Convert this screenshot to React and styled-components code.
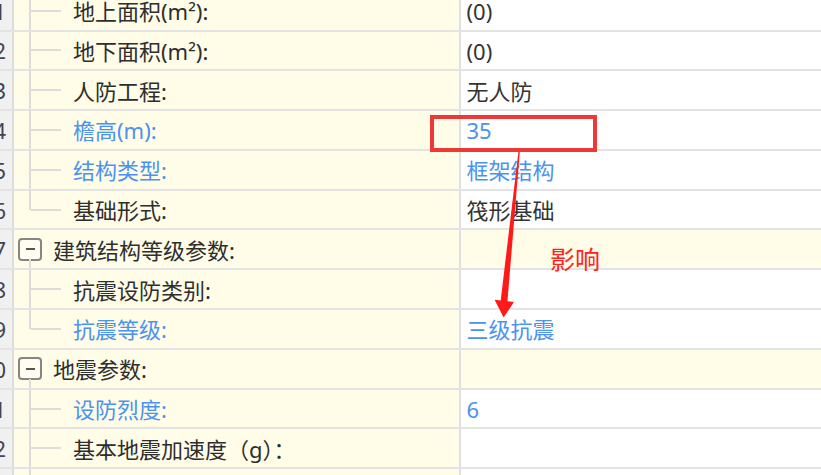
import React from "react";
import styled, { createGlobalStyle } from "styled-components";

const Global = createGlobalStyle`
  html, body { margin: 0; padding: 0; background: #ffffff; overflow: hidden; }
  body { font-family: "Noto Sans", "Noto Sans CJK SC", sans-serif; }
`;

const Page = styled.div`
  position: relative;
  width: 821px;
  height: 475px;
  overflow: hidden;
  background: #ffffff;
`;

const Grid = styled.div`
  display: flex;
  flex-direction: column;
  margin-top: -8.3px;
`;

const Row = styled.div`
  display: flex;
  height: 39.8px;
  flex: 0 0 39.8px;
  box-sizing: border-box;
  border-bottom: 2.4px solid #e3e3e3;
`;

const NumCell = styled.div`
  flex: 0 0 14px;
  box-sizing: border-box;
  border-right: 2px solid #dcdcdc;
  background: #f0f0f0;
  display: flex;
  justify-content: flex-end;
  align-items: center;
  overflow: hidden;
  padding-right: 6px;
  font-size: 22px;
  color: #3f4554;
  white-space: nowrap;
`;

const LabelCell = styled.div`
  flex: 0 0 444.5px;
  display: flex;
  align-items: stretch;
  background: #fffce8;
  overflow: hidden;
`;

const Guide = styled.span`
  position: relative;
  flex: 0 0 47px;
  &::before {
    content: "";
    position: absolute;
    left: 15px;
    top: -3px;
    width: 2px;
    height: ${(p) => (p.$last ? "calc(50% + 3px)" : "calc(100% + 6px)")};
    background: #dcdcdc;
  }
  &::after {
    content: "";
    position: absolute;
    left: 17px;
    top: calc(50% - 1px);
    width: 30px;
    height: 2px;
    background: #dcdcdc;
  }
`;

const GroupGuide = styled.span`
  position: relative;
  flex: 0 0 39px;
  display: flex;
  align-items: center;
  &::after {
    content: "";
    position: absolute;
    left: 15px;
    top: calc(50% + 10px);
    width: 2px;
    bottom: -3px;
    background: #dcdcdc;
  }
`;

const ExpandBox = styled.span`
  margin-left: 4px;
  width: 24px;
  height: 23px;
  box-sizing: border-box;
  border: 2px solid #858585;
  border-radius: 4px;
  background: #fffdf2;
  display: flex;
  align-items: center;
  justify-content: center;
  &::before {
    content: "";
    width: 9px;
    height: 2px;
    background: #555;
  }
`;

const Label = styled.span`
  align-self: center;
  margin-left: ${(p) => (p.$group ? "0" : "12px")};
  font-size: 22px;
  line-height: 1;
  white-space: nowrap;
  color: ${(p) => (p.$blue ? "#4b93ef" : "#2e2e2e")};
  padding-top: 1px;
`;

const ValueCell = styled.div`
  flex: 1 1 auto;
  box-sizing: border-box;
  border-left: 2px solid #e0e0e0;
  background: ${(p) => (p.$group ? "#fffce8" : "#ffffff")};
  display: flex;
  align-items: center;
  padding-left: 6px;
  font-size: 22px;
  line-height: 1;
  padding-top: 1px;
  white-space: nowrap;
  color: ${(p) => (p.$blue ? "#4b93ef" : "#333333")};
`;

const Overlay = styled.div`
  position: absolute;
  inset: 0;
  pointer-events: none;
`;

const RedBox = styled.div`
  position: absolute;
  left: 430px;
  top: 115px;
  width: 167px;
  height: 37px;
  box-sizing: border-box;
  border: 4px solid #ee3737;
`;

const Note = styled.span`
  position: absolute;
  left: 550px;
  top: 246px;
  font-family: "Noto Sans CJK SC", sans-serif;
  font-weight: 400;
  font-size: 25px;
  line-height: 1;
  color: #ff2222;
`;

const ArrowSvg = styled.svg`
  position: absolute;
  left: 0;
  top: 0;
`;

const rows = [
  { n: 11, label: "地上面积(m²):", value: "(0)" },
  { n: 12, label: "地下面积(m²):", value: "(0)" },
  { n: 13, label: "人防工程:", value: "无人防" },
  { n: 14, label: "檐高(m):", value: "35", blue: true },
  { n: 15, label: "结构类型:", value: "框架结构", blue: true },
  { n: 16, label: "基础形式:", value: "筏形基础", last: true },
  { n: 17, label: "建筑结构等级参数:", group: true },
  { n: 18, label: "抗震设防类别:", value: "" },
  { n: 19, label: "抗震等级:", value: "三级抗震", blue: true, last: true },
  { n: 20, label: "地震参数:", group: true },
  { n: 21, label: "设防烈度:", value: "6", blue: true },
  { n: 22, label: "基本地震加速度（g）：", value: "" },
  { n: 23, label: "", value: "" },
];

export default function App() {
  return (
    <>
      <Global />
      <Page>
        <Grid>
          {rows.map((r) => (
            <Row key={r.n}>
              <NumCell>{r.n}</NumCell>
              <LabelCell>
                {r.group ? (
                  <GroupGuide>
                    <ExpandBox />
                  </GroupGuide>
                ) : (
                  <Guide $last={r.last} />
                )}
                <Label $group={r.group} $blue={r.blue}>
                  {r.label}
                </Label>
              </LabelCell>
              <ValueCell $group={r.group} $blue={r.blue}>
                {r.value}
              </ValueCell>
            </Row>
          ))}
        </Grid>
        <Overlay>
          <RedBox />
          <ArrowSvg width="821" height="475" viewBox="0 0 821 475">
            <polygon
              points="518.4,152 519.8,152 507.4,301.8 500.6,301.2"
              fill="#ff1a1a"
            />
            <polygon points="494.6,299.8 514,302 503.6,317.5" fill="#ff1a1a" />
          </ArrowSvg>
          <Note>影响</Note>
        </Overlay>
      </Page>
    </>
  );
}
